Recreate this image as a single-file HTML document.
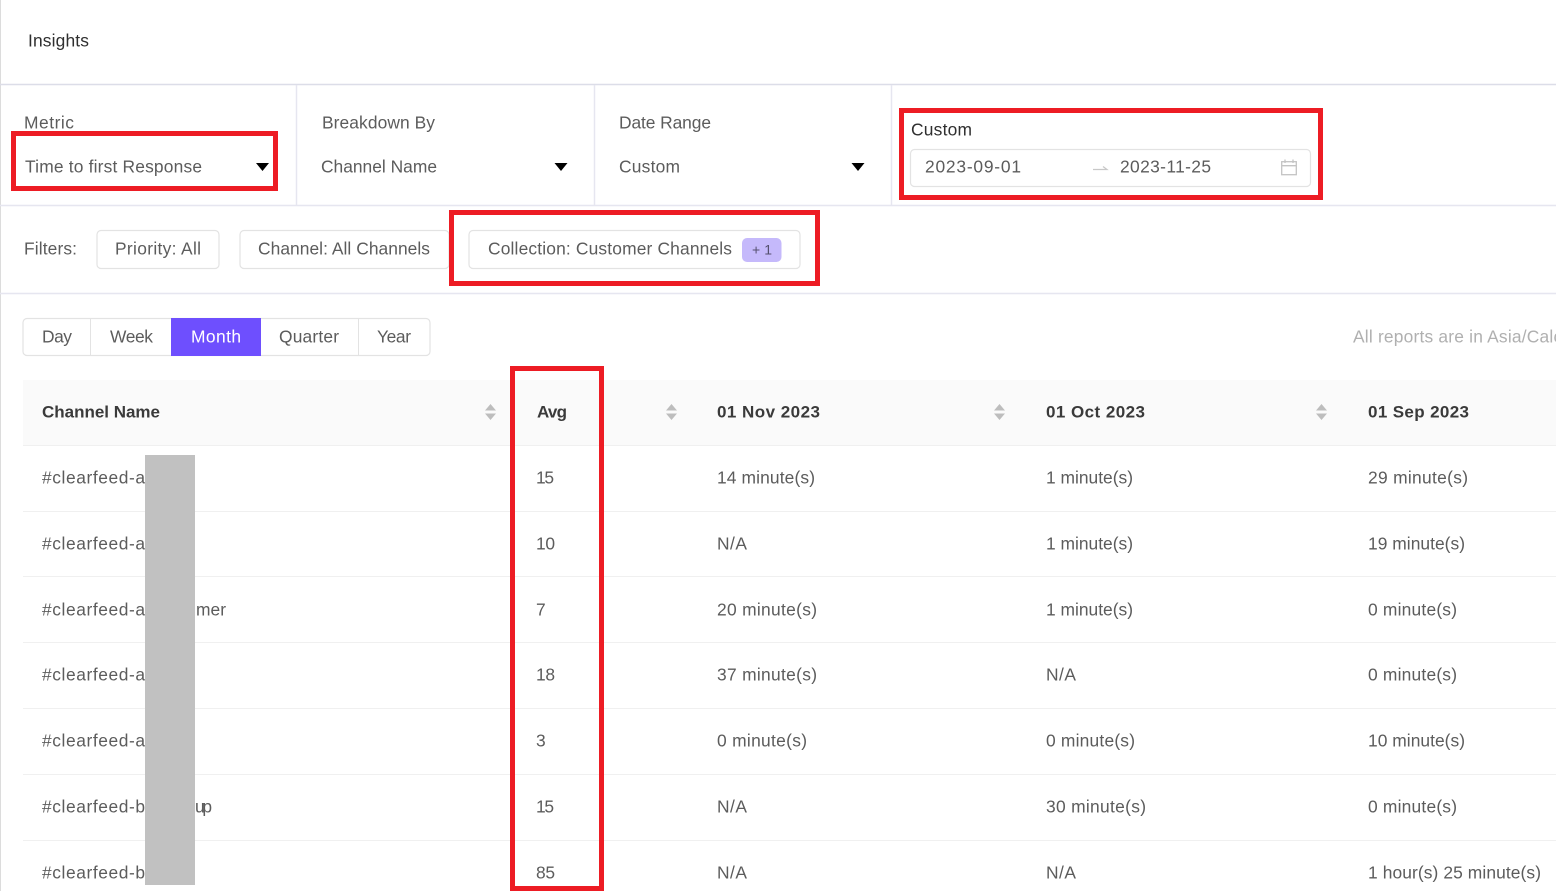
<!DOCTYPE html>
<html lang="en">
<head>
<meta charset="utf-8">
<title>Insights</title>
<style>
html,body{margin:0;padding:0;background:#fff;width:1556px;height:891px;overflow:hidden}
svg{display:block;position:absolute;left:0;top:0}
text{font-family:"Liberation Sans",sans-serif;font-size:17.4px;fill:#5c5c5c;white-space:pre;transform:translateY(-0.7px)}
.d{fill:#2f2f2f}
.h{font-weight:700;fill:#3a3a3a;font-size:17px}
.g{fill:#b0b0b0}
.l{stroke:#e6e6f0;stroke-width:1.5}
.r{stroke:#f0f0f0;stroke-width:1}
.b{fill:#fff;stroke:#e3e3e3;stroke-width:1.2}
.red{fill:none;stroke:#ed1c24;stroke-width:5}
.s{fill:#bdbdbd}
</style>
</head>
<body>
<svg width="1556" height="891" viewBox="0 0 1556 891" xmlns="http://www.w3.org/2000/svg">
<rect width="1556" height="891" fill="#fff"/>
<line x1="0.5" y1="0" x2="0.5" y2="891" stroke="#dcdcdc" stroke-width="1"/>
<text x="28" y="47" textLength="61" class="d">Insights</text>

<line x1="0" y1="84.5" x2="1556" y2="84.5" stroke="#dcdde8" stroke-width="1.5"/>
<line x1="296.5" y1="85" x2="296.5" y2="205" class="l"/>
<line x1="594.5" y1="85" x2="594.5" y2="205" class="l"/>
<line x1="891.5" y1="85" x2="891.5" y2="205" class="l"/>
<line x1="0" y1="205.5" x2="1556" y2="205.5" class="l"/>
<line x1="0" y1="293.5" x2="1556" y2="293.5" class="l"/>

<text x="24" y="129" textLength="50">Metric</text>
<text x="25" y="173" textLength="177">Time to first Response</text>
<path d="M256 163h13l-6.500 8z" fill="#000"/>
<text x="322" y="129" textLength="113">Breakdown By</text>
<text x="321" y="173" textLength="116">Channel Name</text>
<path d="M554.500 163h13l-6.500 8z" fill="#000"/>
<text x="619" y="129" textLength="92">Date Range</text>
<text x="619" y="173" textLength="61">Custom</text>
<path d="M851.500 163h13l-6.500 8z" fill="#000"/>

<text x="911" y="136" textLength="61" class="d">Custom</text>
<rect x="910.500" y="149.500" width="400" height="37" rx="4" class="b"/>
<text x="925" y="173" textLength="96">2023-09-01</text>
<path d="M1093 169.500h14l-4-3" fill="none" stroke="#c8c8c8" stroke-width="1.200"/>
<text x="1120" y="173" textLength="91">2023-11-25</text>
<g fill="none" stroke="#c4c4c4" stroke-width="1.300">
<rect x="1281.700" y="161.700" width="14.600" height="13"/>
<path d="M1281.700 165.700h14.600M1285 159.500v3.500M1293 159.500v3.500"/>
</g>

<text x="24" y="255" textLength="53">Filters:</text>
<rect x="97" y="230.500" width="122" height="38" rx="4" class="b"/>
<text x="115" y="255" textLength="86">Priority: All</text>
<rect x="240" y="230.500" width="209" height="38" rx="4" class="b"/>
<text x="258" y="255" textLength="172">Channel: All Channels</text>
<rect x="469" y="230.500" width="331" height="38" rx="4" class="b"/>
<text x="488" y="255" textLength="244">Collection: Customer Channels</text>
<rect x="742" y="238" width="39.500" height="24" rx="5" fill="#c5b9fb"/>
<text x="752" y="255" textLength="20" style="font-size:14px;fill:#55506e">+ 1</text>

<rect x="23" y="318.500" width="407" height="37" rx="4" class="b"/>
<line x1="90.500" y1="319" x2="90.500" y2="355" stroke="#e3e3e3"/>
<rect x="171" y="318" width="90" height="38" fill="#6e4ffe"/>
<line x1="358.500" y1="319" x2="358.500" y2="355" stroke="#e3e3e3"/>
<text x="42" y="343" textLength="30">Day</text>
<text x="110" y="343" textLength="43">Week</text>
<text x="191" y="343" textLength="50" style="fill:#fff">Month</text>
<text x="279" y="343" textLength="60">Quarter</text>
<text x="377" y="343" textLength="34">Year</text>
<text x="1353" y="343" textLength="219" class="g">All reports are in Asia/Calcu</text>

<rect x="23" y="380" width="1533" height="65" fill="#fafafa"/>
<line x1="23" y1="445.500" x2="1556" y2="445.500" class="r"/>
<text x="42" y="418" textLength="118" class="h">Channel Name</text>
<text x="537" y="418" textLength="30" class="h">Avg</text>
<text x="717" y="418" textLength="103" class="h">01 Nov 2023</text>
<text x="1046" y="418" textLength="99" class="h">01 Oct 2023</text>
<text x="1368" y="418" textLength="101" class="h">01 Sep 2023</text>
<g class="s">
<path d="M485 410.500l5.500-6.500 5.500 6.500zM485 413.500l5.500 6.500 5.500-6.500z"/>
<path d="M666 410.500l5.500-6.500 5.500 6.500zM666 413.500l5.500 6.500 5.500-6.500z"/>
<path d="M994 410.500l5.500-6.500 5.500 6.500zM994 413.500l5.500 6.500 5.500-6.500z"/>
<path d="M1316 410.500l5.500-6.500 5.500 6.500zM1316 413.500l5.500 6.500 5.500-6.500z"/>
</g>

<line x1="23" y1="511.500" x2="1556" y2="511.500" class="r"/>
<line x1="23" y1="576.500" x2="1556" y2="576.500" class="r"/>
<line x1="23" y1="642.500" x2="1556" y2="642.500" class="r"/>
<line x1="23" y1="708.500" x2="1556" y2="708.500" class="r"/>
<line x1="23" y1="774.500" x2="1556" y2="774.500" class="r"/>
<line x1="23" y1="840.500" x2="1556" y2="840.500" class="r"/>

<text x="42" y="484" textLength="103">#clearfeed-a</text>
<text x="536" y="484" textLength="18">15</text>
<text x="717" y="484" textLength="98">14 minute(s)</text>
<text x="1046" y="484" textLength="87">1 minute(s)</text>
<text x="1368" y="484" textLength="100">29 minute(s)</text>

<text x="42" y="550" textLength="103">#clearfeed-a</text>
<text x="536" y="550" textLength="19">10</text>
<text x="717" y="550" textLength="30">N/A</text>
<text x="1046" y="550" textLength="87">1 minute(s)</text>
<text x="1368" y="550" textLength="97">19 minute(s)</text>

<text x="42" y="616" textLength="103">#clearfeed-a</text>
<text x="196" y="616" textLength="30">mer</text>
<text x="536" y="616" textLength="10">7</text>
<text x="717" y="616" textLength="100">20 minute(s)</text>
<text x="1046" y="616" textLength="87">1 minute(s)</text>
<text x="1368" y="616" textLength="89">0 minute(s)</text>

<text x="42" y="681" textLength="103">#clearfeed-a</text>
<text x="536" y="681" textLength="19">18</text>
<text x="717" y="681" textLength="100">37 minute(s)</text>
<text x="1046" y="681" textLength="30">N/A</text>
<text x="1368" y="681" textLength="89">0 minute(s)</text>

<text x="42" y="747" textLength="103">#clearfeed-a</text>
<text x="536" y="747" textLength="11">3</text>
<text x="717" y="747" textLength="90">0 minute(s)</text>
<text x="1046" y="747" textLength="89">0 minute(s)</text>
<text x="1368" y="747" textLength="97">10 minute(s)</text>

<text x="42" y="813" textLength="103">#clearfeed-b</text>
<text x="195" y="813" textLength="17">up</text>
<text x="536" y="813" textLength="18">15</text>
<text x="717" y="813" textLength="30">N/A</text>
<text x="1046" y="813" textLength="100">30 minute(s)</text>
<text x="1368" y="813" textLength="89">0 minute(s)</text>

<text x="42" y="879" textLength="103">#clearfeed-b</text>
<text x="536" y="879" textLength="19">85</text>
<text x="717" y="879" textLength="30">N/A</text>
<text x="1046" y="879" textLength="30">N/A</text>
<text x="1368" y="879" textLength="173">1 hour(s) 25 minute(s)</text>

<rect x="145" y="455" width="50" height="430" fill="#c1c1c1"/>

<rect class="red" x="13.500" y="133.500" width="262" height="55"/>
<rect class="red" x="901.500" y="110.500" width="419" height="87"/>
<rect class="red" x="451.500" y="212.500" width="366" height="71"/>
<rect class="red" x="512.500" y="368.500" width="89" height="520"/>
</svg>
</body>
</html>
